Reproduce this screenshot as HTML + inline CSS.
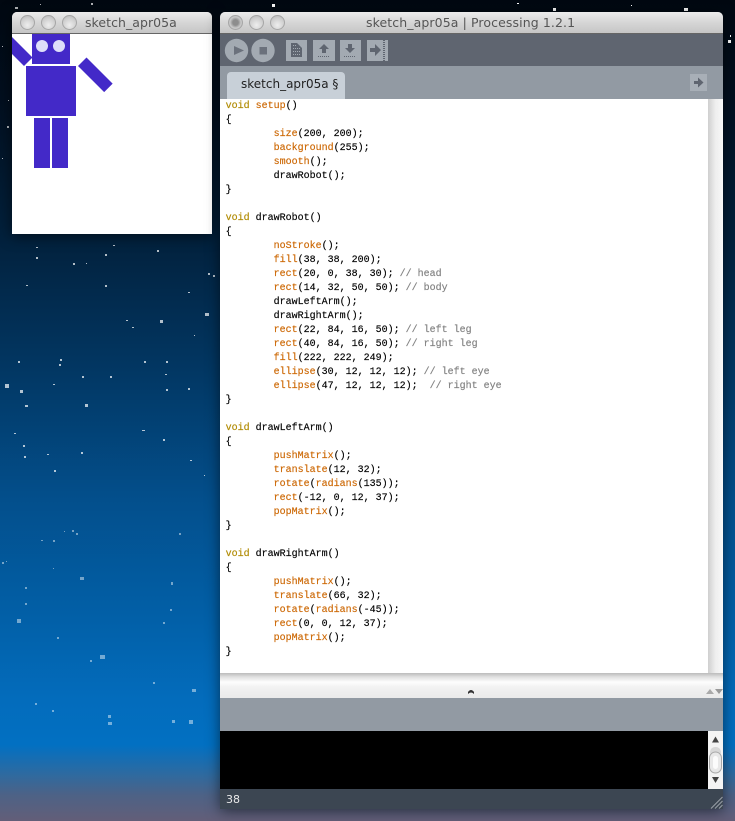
<!DOCTYPE html>
<html><head><meta charset="utf-8"><style>
*{box-sizing:border-box}
html,body{margin:0;padding:0}
body{width:735px;height:821px;position:relative;overflow:hidden;background:linear-gradient(to bottom,#010811 0,#020f1f 100px,#02213d 240px,#023763 370px,#034f8c 500px,#0260a8 620px,#036cbc 700px,#0270c2 745px,#2f6a9f 775px,#4d6286 795px,#635e78 821px)}
.a{position:absolute}
.win{position:absolute;box-shadow:0 2px 14px rgba(0,0,0,.55);border-radius:5px 5px 0 0}
.tb{position:absolute;left:0;top:0;right:0;height:22px;background:linear-gradient(#ececec,#d6d6d6 50%,#c6c6c6);border-radius:5px 5px 0 0;border-bottom:1px solid #666;font:12.5px/22px "DejaVu Sans","Liberation Sans",sans-serif;color:#555;white-space:pre}
.lt{position:absolute;top:3px;width:15px;height:15px;border-radius:50%;background:radial-gradient(circle at 50% 70%,#eee,#cfcfcf 60%,#b4b4b4);border:1px solid #a6a6a6}
#code{position:absolute;left:225.6px;top:100px;margin:0;font:10px/14px "Liberation Mono",monospace;color:#000;white-space:pre;-webkit-text-stroke:.15px currentColor}
#code b{font-weight:normal;color:#cc6600}
#code i{font-style:normal;color:#b08a00}
#code u{text-decoration:none;color:#808080}
</style></head><body>
<svg class="a" style="left:0;top:0" width="735" height="821" fill="#fff">
<g opacity=".7">
<rect x="15" y="7" width="3" height="2"/><rect x="40" y="4" width="1" height="1"/><rect x="91" y="3" width="2" height="2"/><rect x="2" y="46" width="1" height="1"/><rect x="8" y="100" width="1" height="1"/><rect x="7" y="126" width="2" height="2"/><rect x="2" y="158" width="1" height="1"/>
<rect x="36" y="230" width="1" height="1"/><rect x="113" y="245" width="2" height="1"/><rect x="36" y="247" width="2" height="1"/><rect x="36" y="257" width="2" height="2"/><rect x="105" y="254" width="2" height="2"/><rect x="157" y="250" width="2" height="2"/><rect x="73" y="263" width="2" height="2"/><rect x="86" y="263" width="1" height="1"/><rect x="105" y="285" width="2" height="2"/><rect x="26" y="285" width="2" height="1"/><rect x="208" y="273" width="2" height="2"/><rect x="213" y="275" width="2" height="2"/><rect x="188" y="292" width="2" height="1"/><rect x="160" y="320" width="3" height="3"/><rect x="205" y="313" width="4" height="3"/><rect x="126" y="320" width="2" height="1"/><rect x="132" y="327" width="2" height="1"/><rect x="194" y="335" width="1" height="1"/>
<rect x="18" y="361" width="2" height="2"/><rect x="60" y="359" width="2" height="2"/><rect x="59" y="364" width="2" height="2"/><rect x="144" y="361" width="2" height="2"/><rect x="166" y="361" width="2" height="2"/><rect x="82" y="376" width="2" height="2"/><rect x="110" y="376" width="2" height="2"/><rect x="165" y="374" width="2" height="1"/><rect x="5" y="384" width="4" height="4"/><rect x="20" y="390" width="3" height="3"/><rect x="53" y="384" width="2" height="1"/><rect x="166" y="389" width="2" height="2"/><rect x="188" y="388" width="2" height="2"/><rect x="25" y="405" width="3" height="2"/><rect x="85" y="404" width="3" height="3"/><rect x="142" y="430" width="3" height="1"/><rect x="163" y="439" width="2" height="2"/><rect x="14" y="433" width="2" height="1"/><rect x="23" y="445" width="2" height="2"/><rect x="24" y="456" width="2" height="2"/><rect x="47" y="454" width="2" height="1"/><rect x="81" y="452" width="2" height="2"/><rect x="190" y="460" width="2" height="1"/><rect x="54" y="470" width="2" height="2"/><rect x="204" y="475" width="1" height="1"/>
</g>
<g opacity=".45">
<rect x="72" y="530" width="2" height="2"/><rect x="64" y="531" width="1" height="1"/><rect x="76" y="533" width="2" height="2"/><rect x="53" y="540" width="2" height="2"/><rect x="41" y="540" width="2" height="1"/><rect x="179" y="533" width="2" height="2"/><rect x="53" y="568" width="1" height="1"/><rect x="2" y="562" width="2" height="2"/><rect x="6" y="561" width="1" height="1"/><rect x="163" y="622" width="2" height="2"/><rect x="25" y="587" width="2" height="2"/><rect x="25" y="603" width="2" height="2"/><rect x="171" y="582" width="2" height="3"/><rect x="80" y="577" width="4" height="3"/><rect x="17" y="619" width="4" height="4"/><rect x="100" y="655" width="5" height="4"/><rect x="57" y="637" width="2" height="2"/><rect x="170" y="609" width="2" height="2"/><rect x="192" y="689" width="4" height="3"/><rect x="153" y="682" width="2" height="2"/>
<rect x="108" y="715" width="3" height="3"/><rect x="108" y="722" width="4" height="3"/><rect x="172" y="720" width="3" height="3"/><rect x="189" y="720" width="4" height="4"/><rect x="90" y="660" width="2" height="2"/><rect x="52" y="710" width="2" height="2"/><rect x="35" y="703" width="2" height="2"/>
</g>
<rect x="684" y="8" width="4" height="3"/><rect x="553" y="8" width="3" height="3"/><rect x="728" y="40" width="3" height="3"/><rect x="730" y="35" width="1" height="2"/><rect x="272" y="4" width="3" height="3"/><rect x="517" y="3" width="2" height="1"/><rect x="631" y="5" width="1" height="1"/>
</svg>

<!-- sketch window -->
<div class="win" style="left:12px;top:12px;width:200px;height:222px;background:#fff">
<div class="tb" style="padding-left:73px"><span style="letter-spacing:.05px">sketch_apr05a</span>
<span class="lt" style="left:8px"></span><span class="lt" style="left:29px"></span><span class="lt" style="left:50px"></span></div>
<svg class="a" style="left:0;top:22px" width="200" height="200">
<g fill="#4329c8">
<rect x="20" y="0" width="38" height="30"/>
<rect x="14" y="32" width="50" height="50"/>
<g transform="translate(12 32) rotate(135)"><rect x="-12" y="0" width="12" height="37"/></g>
<g transform="translate(66 32) rotate(-45)"><rect x="0" y="0" width="12" height="37"/></g>
<rect x="22" y="84" width="16" height="50"/>
<rect x="40" y="84" width="16" height="50"/>
</g>
<circle cx="30" cy="12" r="6" fill="#dedef9"/><circle cx="47" cy="12" r="6" fill="#dedef9"/>
</svg>
</div>

<!-- main window -->
<div class="win" style="left:220px;top:12px;width:503px;height:797px;background:#929aa3">
<div class="tb" style="padding-left:146px"><span style="letter-spacing:.1px">sketch_apr05a | Processing 1.2.1</span>
<span class="lt" style="left:8px;background:radial-gradient(circle,#8d8d8d 30%,#c9c9c9 60%,#b4b4b4)"></span><span class="lt" style="left:29px"></span><span class="lt" style="left:50px"></span></div>
</div>
<div class="a" style="left:220px;top:34px;width:503px;height:32px;background:#5f6570"></div>
<svg class="a" style="left:220px;top:34px" width="180" height="32">
<circle cx="16.500" cy="16.500" r="11.700" fill="#a3aab2"/><path d="M14 12l10 4.500-10 4.500z" fill="#6b717c"/>
<circle cx="43" cy="16.500" r="11.700" fill="#a3aab2"/><rect x="39.500" y="13" width="7.500" height="7.500" fill="#6b717c"/>
<rect x="66" y="6" width="21" height="21" fill="#a3aab2"/><path d="M71 9h6l5 5v9H71z" fill="#5f6570"/><path d="M73 11.500h3M73 14.500h7M73 17.500h7M73 20.500h7" stroke="#a3aab2" stroke-dasharray="1 1"/>
<rect x="93" y="6" width="22" height="21" fill="#a3aab2"/><path d="M104 10l5 5h-3v4h-4v-4h-3z" fill="#5f6570"/><path d="M98 22.500h12" stroke="#5f6570" stroke-dasharray="1 1"/>
<rect x="120" y="6" width="21" height="21" fill="#a3aab2"/><path d="M130 19l-5-5h3v-4h4v4h3z" fill="#5f6570"/><path d="M124 22.500h12" stroke="#5f6570" stroke-dasharray="1 1"/>
<rect x="147" y="6" width="21" height="21" fill="#a3aab2"/><path d="M150 14h5v-4l6 6-6 6v-4h-5z" fill="#5f6570"/><path d="M164 6v21" stroke="#5f6570" stroke-width="2" stroke-dasharray="1 1"/>
</svg>
<div class="a" style="left:220px;top:66px;width:503px;height:33px;background:#929aa3"></div>
<div class="a" style="left:227px;top:72px;width:118px;height:27px;background:#c8d0d8;border-radius:4px 4px 0 0;padding-left:14px;font:12px/25px 'DejaVu Sans','Liberation Sans',sans-serif;color:#222;white-space:pre">sketch_apr05a §</div>
<div class="a" style="left:690px;top:74px;width:17px;height:17px;background:#a8afb7"></div>
<svg class="a" style="left:690px;top:74px" width="17" height="17"><path d="M4 7h4V3.500l5.500 5-5.500 5V10H4z" fill="#5f6570"/></svg>

<!-- editor -->
<div class="a" style="left:220px;top:99px;width:488px;height:574px;background:#fff"></div>
<div class="a" style="left:708px;top:99px;width:15px;height:574px;background:linear-gradient(to right,#cfcfcf,#eeeeee 50%,#f8f8f8)"></div>
<div class="a" style="left:220px;top:673px;width:503px;height:25px;background:linear-gradient(#bbb 0,#e0e0e0 4px,#fdfdfd 9px,#f2f2f2 14px,#ebebeb 25px)"></div>
<svg class="a" style="left:465px;top:686px" width="14" height="10"><path d="M3 6q3-4 6 0v2q-3-3-6 0z" fill="#333"/></svg>
<svg class="a" style="left:704px;top:688px" width="20" height="9"><path d="M2 6l4-5 4 5z" fill="#aaa"/><path d="M11 1h8l-4 5z" fill="#999"/></svg>
<pre id="code"><i>void</i> <b>setup</b>()
{
        <b>size</b>(200, 200);
        <b>background</b>(255);
        <b>smooth</b>();
        drawRobot();
}

<i>void</i> drawRobot()
{
        <b>noStroke</b>();
        <b>fill</b>(38, 38, 200);
        <b>rect</b>(20, 0, 38, 30); <u>// head</u>
        <b>rect</b>(14, 32, 50, 50); <u>// body</u>
        drawLeftArm();
        drawRightArm();
        <b>rect</b>(22, 84, 16, 50); <u>// left leg</u>
        <b>rect</b>(40, 84, 16, 50); <u>// right leg</u>
        <b>fill</b>(222, 222, 249);
        <b>ellipse</b>(30, 12, 12, 12); <u>// left eye</u>
        <b>ellipse</b>(47, 12, 12, 12);  <u>// right eye</u>
}

<i>void</i> drawLeftArm()
{
        <b>pushMatrix</b>();
        <b>translate</b>(12, 32);
        <b>rotate</b>(<b>radians</b>(135));
        <b>rect</b>(-12, 0, 12, 37);
        <b>popMatrix</b>();
}

<i>void</i> drawRightArm()
{
        <b>pushMatrix</b>();
        <b>translate</b>(66, 32);
        <b>rotate</b>(<b>radians</b>(-45));
        <b>rect</b>(0, 0, 12, 37);
        <b>popMatrix</b>();
}</pre>

<!-- console -->
<div class="a" style="left:220px;top:731px;width:488px;height:58px;background:#000"></div>
<div class="a" style="left:708px;top:731px;width:15px;height:58px;background:#f4f4f4"></div>
<svg class="a" style="left:708px;top:731px" width="15" height="58">
<path d="M4 11.500l3.500-6 3.500 6z" fill="#444"/><path d="M4 46h7l-3.500 6z" fill="#444"/>
<rect x="2" y="16" width="11" height="10" rx="5" fill="#d8d8d8"/>
<rect x="1.500" y="21" width="12" height="21" rx="6" fill="#e8e8e8" stroke="#a8a8a8"/><rect x="5" y="25" width="5" height="13" rx="2.500" fill="#fbfbfb"/>
</svg>
<div class="a" style="left:220px;top:789px;width:503px;height:20px;background:#3c4652;padding-left:6px;font:11px/22px 'DejaVu Sans','Liberation Sans',sans-serif;color:#e8e8e8">38</div>
<svg class="a" style="left:710px;top:796px" width="13" height="13" stroke="#9aa0a8"><path d="M1 12.500L12.500 1M5 12.500L12.500 5M9 12.500L12.500 9" fill="none"/></svg>
</body></html>
